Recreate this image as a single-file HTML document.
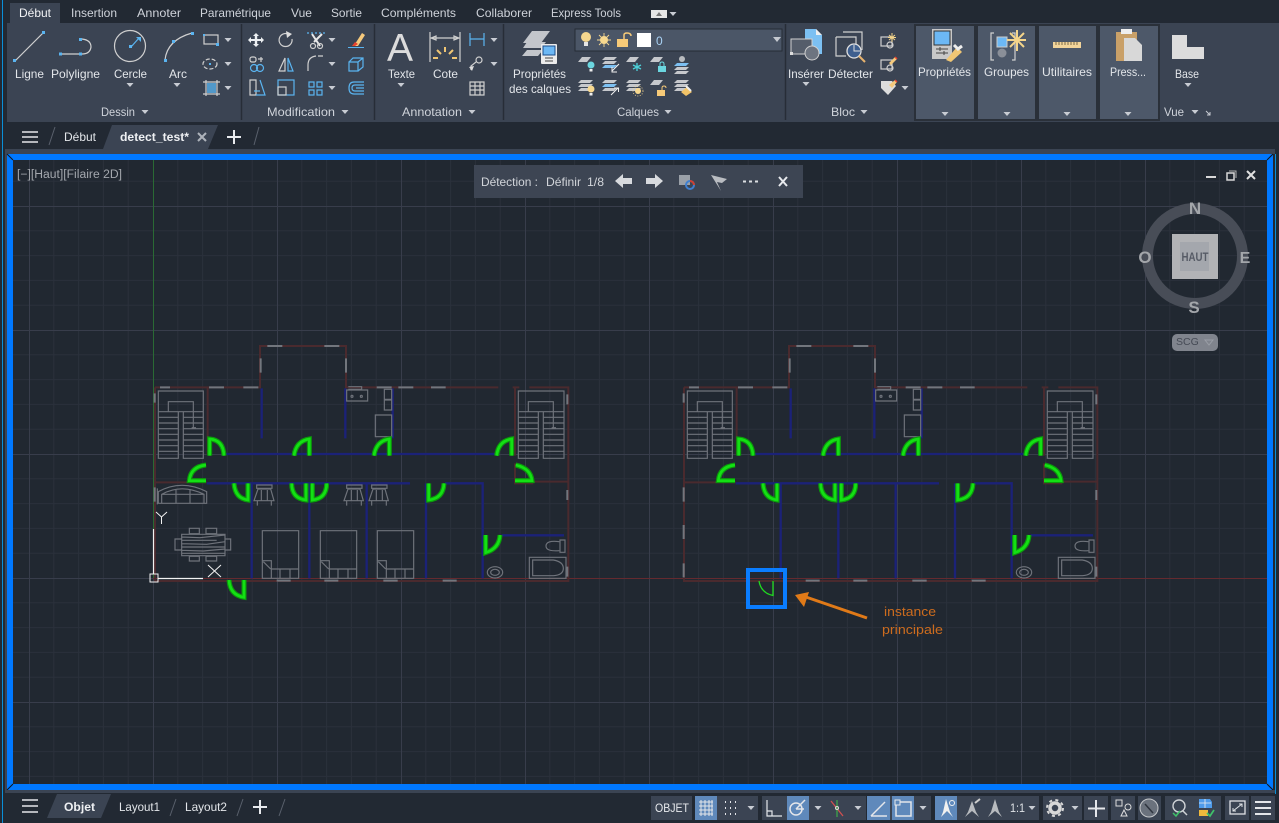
<!DOCTYPE html>
<html lang="fr"><head><meta charset="utf-8"><title>AutoCAD</title>
<style>
html,body{margin:0;padding:0;background:#222933;width:1279px;height:823px;overflow:hidden}
svg{display:block;position:absolute;left:0;top:0}
text{font-family:"Liberation Sans",sans-serif}
.t{font-size:12px;fill:#cfd3da}
.l{font-size:12px;fill:#e3e6ea}
.s{fill:none;stroke:#d0d0d0;stroke-width:1.2}
.b{fill:none;stroke:#5ab4f0;stroke-width:1.2}
.sq{fill:#5ab4f0}
.btn{fill:#3b4453}
.on{fill:#5f89bb}
.st{fill:none;stroke:#e4e6ea;stroke-width:1.5}
</style></head><body>
<svg width="1279" height="823" viewBox="0 0 1279 823" xmlns="http://www.w3.org/2000/svg">
<defs>
<pattern id="grid" x="153" y="82" width="124" height="124" patternUnits="userSpaceOnUse">
<path d="M24.8,0V124M49.6,0V124M74.4,0V124M99.2,0V124M0,24.8H124M0,49.6H124M0,74.4H124M0,99.2H124" stroke="#2a303b" stroke-width="1" fill="none"/>
<path d="M0.5,0V124M0,0.5H124" stroke="#383d4b" stroke-width="1" fill="none"/>
</pattern>
<path id="tri" d="M-3.5,-2H3.5L0,2Z" fill="#c8ccd3"/>
<path id="lay" d="M4,0H13L9,5H0Z" fill="#c6c8cc"/>
<path id="lyr" d="M3,0H15L12,3H0Z" fill="#c6c8cc"/>
<path id="lyb" d="M3,0H15L12,3H0Z" fill="#7cc0f2"/>
<g id="walls" fill="none">
<path d="M45,157H360V33H618V157H1075M1118,157H1138M1168,157H1285V738H45V157M203,157V360M45,442H200M1125,157V362M1125,385V445H1180M1180,440H1282" stroke="#4a2a2e" stroke-width="6"/>
<g stroke="#1b2278" stroke-width="7">
<path d="M365,160V310M616,160V310M758,160V310M255,357H1070M200,445H810M335,445V730M508,445V730M680,445V730M858,445V730M915,445H1028V730M1085,601H1272"/>
</g>
<g stroke="#72767d" stroke-width="6">
<path d="M60,157H90M207,157H252M310,157H355M382,33H427M553,33H598M362,70V113M618,70V113M710,157H755M775,157H820M873,157H917M44,175V203M44,457V500M1282,178V208M1282,465V495M1282,695V725M410,737H452M553,737H595M730,737H773M908,737H950"/>
</g>
<g stroke="#6f737b" stroke-width="3.500">
<path d="M55,168H190V370H130V230H115V370H55ZM85,230V200H160V278M55,230H115M55,247H115M55,264H115M55,281H115M55,298H115M55,315H115M55,332H115M55,349H115M130,230H190M130,247H190M130,264H190M130,281H190M130,298H190M130,315H190M130,332H190M130,349H190M155,278H168"/>
<path transform="translate(1080,0)" d="M55,168H192V370H130V230H115V370H55ZM85,230V200H160V278M55,230H115M55,247H115M55,264H115M55,281H115M55,298H115M55,315H115M55,332H115M55,349H115M130,230H192M130,247H192M130,264H192M130,281H192M130,298H192M130,315H192M130,332H192M130,349H192M155,278H168"/>
<path d="M620,165H683V198H620ZM625,155H665V163H625M733,163H755V193H733ZM733,195H755V225H733ZM706,240H755V305H706Z"/>
<circle cx="636" cy="184" r="3"/><circle cx="664" cy="184" r="3"/>
<path d="M1260,615H1275V652H1260ZM1258,620Q1218,615 1218,633Q1218,650 1258,647M1168,667H1278V730H1168ZM1178,675H1240Q1270,680 1270,700Q1270,720 1240,722H1178Z"/>
<ellipse cx="1065" cy="712" rx="23" ry="17"/><ellipse cx="1065" cy="712" rx="13" ry="9"/>
</g>
</g>
<g id="dp" fill="none">
<path d="M209,362V312Q250,315 252,362"/>
<path d="M508,362V312Q468,318 462,362"/>
<path d="M748,362V312Q708,318 702,362"/>
<path d="M1115,362V312Q1075,318 1070,362"/>
<path d="M198,437H148Q152,395 198,390"/>
<path d="M1125,437H1176Q1172,400 1127,390"/>
<path d="M324,445V495Q285,490 282,445"/>
<path d="M498,445V495Q455,490 455,445"/>
<path d="M517,445V495Q560,490 560,445"/>
<path d="M866,445V495Q910,490 912,445"/>
<path d="M1037,600V653Q1078,640 1080,600"/>
</g>
<g id="doors">
<use href="#dp" stroke="#0b9c0b" stroke-width="15"/>
<use href="#dp" stroke="#14e014" stroke-width="8"/>
</g>
</defs>

<!-- chrome -->
<rect width="1279" height="823" fill="#222933"/>
<rect x="2" y="0" width="1" height="823" fill="#0a8fd8"/>
<rect x="10" y="3" width="50" height="20" fill="#3b4453"/>
<g class="t">
<text x="19" y="17" style="fill:#f2f3f5" textLength="32" lengthAdjust="spacingAndGlyphs">Début</text>
<text x="71" y="17" textLength="46" lengthAdjust="spacingAndGlyphs">Insertion</text>
<text x="137" y="17" textLength="44" lengthAdjust="spacingAndGlyphs">Annoter</text>
<text x="200" y="17" textLength="71" lengthAdjust="spacingAndGlyphs">Paramétrique</text>
<text x="291" y="17" textLength="21" lengthAdjust="spacingAndGlyphs">Vue</text>
<text x="331" y="17" textLength="31" lengthAdjust="spacingAndGlyphs">Sortie</text>
<text x="381" y="17" textLength="75" lengthAdjust="spacingAndGlyphs">Compléments</text>
<text x="476" y="17" textLength="56" lengthAdjust="spacingAndGlyphs">Collaborer</text>
<text x="551" y="17" textLength="70" lengthAdjust="spacingAndGlyphs">Express Tools</text>
</g>
<rect x="651" y="10" width="16" height="8" fill="#e6e6e6"/><path d="M656,16H662L659,12Z" fill="#777"/>
<use href="#tri" x="673" y="14"/>

<!-- ribbon -->
<rect x="7" y="23" width="1272" height="99" fill="#3b4453"/>
<path d="M241.500,24V120M374.500,24V120M503.500,24V120M785.500,24V120" stroke="#272d37" stroke-width="1.500"/>
<g fill="#4d5869" stroke="#2a3039" stroke-width="2">
<rect x="915" y="25" width="60" height="95"/><rect x="977" y="25" width="59" height="95"/><rect x="1038" y="25" width="59" height="95"/><rect x="1099" y="25" width="60" height="95"/>
</g>

<!-- draw icons -->
<path class="s" d="M15,61L43,33"/><rect class="sq" x="13" y="59" width="3" height="3"/><rect class="sq" x="42" y="31" width="3" height="3"/>
<path class="s" d="M61,54H80M82,39Q91,40 91,47Q90,54 82,54"/><rect class="sq" x="59" y="52.500" width="3" height="3"/><rect class="sq" x="79" y="52.500" width="3" height="3"/><rect class="sq" x="79" y="38" width="3" height="3"/>
<circle class="s" cx="130" cy="46" r="15.500"/><path class="b" d="M131,47L139,38"/><path class="sq" d="M136,37H141V42Z"/><rect class="sq" x="129" y="45" width="3" height="3"/>
<path class="s" d="M165,60Q167,40 192,33"/><rect class="sq" x="164" y="59" width="3" height="3"/><rect class="sq" x="172" y="40" width="3" height="3"/><rect class="sq" x="191" y="32" width="3" height="3"/>
<rect class="s" x="204" y="35" width="14" height="9"/><rect class="sq" x="203" y="34" width="2" height="2"/><rect class="sq" x="216" y="43" width="3" height="3"/>
<ellipse class="s" cx="210" cy="64" rx="7" ry="5" stroke-dasharray="4 2"/><rect class="sq" x="209" y="63" width="2" height="2"/>
<path class="s" d="M203,82H220M203,94H220M206,80V96M217,80V96"/><rect x="207" y="83" width="9" height="10" fill="#5ab4f0" opacity=".75"/>
<use href="#tri" x="228" y="40"/><use href="#tri" x="228" y="64"/><use href="#tri" x="228" y="88"/>

<!-- modify icons -->
<path d="M256,33L259,36H257.200V39H261V37L264,40L261,43V41H257.200V44H259L256,47L253,44H254.800V41H251V43L248,40L251,37V39H254.800V36H253Z" fill="#eceff2"/>
<path class="s" stroke-width="1.500" d="M288,34A6.500,6.500 0 1 0 292,39"/><path d="M286,31L292,34L287,38Z" fill="#ddd"/>
<path d="M307,33H325" stroke="#5ab4f0" stroke-width="1.200" stroke-dasharray="2 2"/><path d="M312,34L320,46M322,34L314,42" stroke="#e8e8e8" stroke-width="2"/><circle class="s" cx="313" cy="46" r="2.500"/><circle class="s" cx="320" cy="46" r="2.500"/>
<use href="#tri" x="332" y="40"/>
<path d="M355,44L362,33L365,35L358,46L352,46Z" fill="#f5c97c"/><path d="M352,46L355,42L358,44L355,46Z" fill="#e8432e"/><path d="M348,47.500H364" stroke="#5ab4f0"/>
<rect class="s" x="250" y="57" width="6" height="5" rx="2"/><path class="s" d="M258,59H263M261,57V62"/><circle class="b" cx="254" cy="68" r="3.500"/><circle class="b" cx="260" cy="68" r="3.500"/>
<path class="s" d="M285,58V71H279Z"/><path class="b" d="M288,58V71H293Z"/>
<path class="s" d="M308,71V65Q308,57 316,56M318,56H323"/>
<use href="#tri" x="332" y="64"/>
<path class="b" d="M349,62H358V71H349ZM349,62L353,58H363V67L358,71M358,62L363,58"/>
<path class="s" d="M250,80H256L256,95H250Z"/><path class="b" d="M260,80L265,95H256M254,91H260"/>
<rect class="b" x="278" y="80" width="16" height="15"/><rect class="s" x="278" y="87" width="8" height="8" fill="#3b4453"/>
<path class="b" d="M309,82H314V87H309ZM317,82H322V87H317ZM309,90H314V95H309ZM317,90H322V95H317Z"/>
<use href="#tri" x="332" y="88"/>
<path class="b" d="M364,82H354Q349,82 349,88Q349,94 354,94H364M364,85H355Q352,85 352,88Q352,91 355,91H364M364,88H356"/>

<!-- annotation -->
<text x="387" y="61" font-size="39" fill="#dcdcdc">A</text>
<path class="s" d="M430,32V62M460,32V62M431,38H459M431,38L436,36V40ZM459,38L454,36V40Z"/>
<path d="M445,47V52M437,50L441,54M453,50L449,54M433,58H438M452,58H457" stroke="#f0c674" stroke-width="2"/>
<path class="b" d="M470,33V46M484,33V46M470,39H484"/><use href="#tri" x="494" y="40"/>
<circle class="s" cx="479" cy="60" r="3"/><path class="s" d="M476,62L471,66V70"/><path d="M469,67L472,71L474,66Z" fill="#ddd"/><use href="#tri" x="494" y="64"/>
<path class="s" d="M470,82H484V95H470ZM470,86H484M470,90H484M475,82V95M480,82V95"/>

<!-- calques -->
<path d="M532,31H550L541,43H523ZM527,42H546L541,48H523ZM527,50H543L538,56H522Z" fill="#c3c6cb"/>
<rect x="541" y="44" width="16" height="20" rx="1" fill="#ececec"/><rect x="543" y="46" width="12" height="9" fill="#6cb8f5" stroke="#1b4e8c"/><path d="M545,58H553M545,61H553" stroke="#444"/>
<rect x="575" y="29" width="207" height="22" fill="#4b5667" stroke="#262c36"/>
<circle cx="586" cy="37" r="5" fill="#f7d88f"/><rect x="584" y="42" width="4" height="4" fill="#e6e6e6"/>
<circle cx="604" cy="40" r="4" fill="#f7d88f"/><path d="M604,33V47M597,40H611M599,35L609,45M609,35L599,45" stroke="#f7d88f" stroke-width=".9"/>
<rect x="617" y="39" width="11" height="8" fill="#f7ca78"/><path d="M624,39V35Q624,33 627,33Q631,33 631,36" stroke="#f7ca78" stroke-width="1.500" fill="none"/>
<rect x="637" y="33" width="14" height="14" fill="#fff"/>
<text x="656" y="45" style="font-size:12px;fill:#a9d2f5">0</text>
<path d="M773,37H781L777,42Z" fill="#c5c9d0"/>

<use href="#lay" x="578" y="57"/><circle cx="591" cy="65" r="3.500" fill="#6bd6e0"/><rect x="589.500" y="69" width="3" height="2.500" fill="#eee"/>
<use href="#lyr" x="602" y="57"/><use href="#lyr" x="602" y="61"/><use href="#lyb" x="602" y="65"/><path d="M619,64L612,71M612,67V72H617" stroke="#f0f0f0" fill="none"/>
<use href="#lay" x="626" y="57"/><path d="M637,63V71M633,65L641,69M641,65L633,69" stroke="#4cd0d8" stroke-width="1.300"/>
<use href="#lay" x="650" y="57"/><rect x="658" y="66" width="8" height="6" fill="#6bd6e0"/><path d="M660,66V64Q660,62 662,62Q664,62 664,64V66" fill="none" stroke="#6bd6e0"/>
<circle cx="682" cy="59" r="3" fill="#b8bbbf"/><use href="#lyb" x="674" y="63"/><use href="#lyr" x="674" y="67"/><use href="#lyr" x="674" y="71"/>

<use href="#lyr" x="578" y="80"/><use href="#lyr" x="578" y="84"/><use href="#lyr" x="578" y="88"/><circle cx="591" cy="89" r="3.500" fill="#f7d88f"/><rect x="589.500" y="93" width="3" height="2.500" fill="#eee"/>
<use href="#lyr" x="602" y="80"/><use href="#lyb" x="602" y="84"/><use href="#lyr" x="602" y="88"/><path d="M611,95L618,88M614,88H618.500V92" stroke="#f0f0f0" fill="none"/>
<use href="#lyr" x="626" y="80"/><use href="#lyr" x="626" y="84"/><use href="#lyr" x="626" y="88"/><circle cx="638" cy="91" r="3" fill="#f7d88f"/><circle cx="638" cy="91" r="5" fill="none" stroke="#f7d88f" stroke-width=".8" stroke-dasharray="1 1.500"/>
<use href="#lay" x="650" y="80"/><rect x="657" y="90" width="8" height="6" fill="#f7ca78"/><path d="M662,90V88Q662,86 664,86Q666,86 666,88" fill="none" stroke="#f7ca78"/>
<use href="#lyr" x="674" y="80"/><use href="#lyr" x="674" y="84"/><use href="#lyr" x="674" y="88"/><path d="M681,92L687,87L692,92L686,96Z" fill="#f2c468"/><path d="M686,86L691,91" stroke="#eee" stroke-width="2"/>

<!-- bloc -->
<path d="M805,29H816L822,35V54H805Z" fill="#7cc0f2"/><path d="M816,29V35H822Z" fill="#eee"/>
<rect x="791" y="39" width="21" height="15" fill="#555d6a" stroke="#d0d0d0"/><circle cx="812" cy="53" r="7" fill="#6d7480" stroke="#d0d0d0"/><rect x="790" y="52" width="3" height="3" fill="#ddd"/>
<path class="s" d="M843,32H862V50M836,37H856V50M836,37V56H846"/><circle cx="854" cy="51" r="7" fill="#3e5f8f" stroke="#e0e0e0" stroke-width="1.300"/><path d="M859,56L865,62" stroke="#e7b26d" stroke-width="2"/><path d="M854,45V51H860" stroke="#ddd" fill="none"/>
<rect class="s" x="881" y="37" width="11" height="9"/><circle class="s" cx="890" cy="45" r="3"/><path d="M892,33V42M888,37.500H896M889,35L895,40M895,35L889,40" stroke="#f5d58a"/>
<rect class="s" x="881" y="60" width="11" height="9"/><circle class="s" cx="890" cy="68" r="3"/><path d="M889,63L895,57L897,59L891,65Z" fill="#f5c97c"/><path d="M895,57L897,59" stroke="#e8432e" stroke-width="1.500"/>
<path d="M881,81H892L896,86L888,95L881,88Z" fill="#ddd"/><path d="M889,85L895,80L897,82L892,88Z" fill="#f5c97c"/><path d="M895,80L897,82" stroke="#e8432e" stroke-width="1.500"/>
<use href="#tri" x="905" y="88"/>

<!-- groups icons -->
<rect x="932" y="29" width="20" height="30" fill="#c8c8c8"/><rect x="934" y="31" width="16" height="14" fill="#6cb8f5" stroke="#333"/><path d="M936,49H948M936,53H948M940,47V51M944,51V55" stroke="#444"/><path d="M946,60L957,47L962,52L951,62Z" fill="#f0c674"/><path d="M954,45L958,49L962,46" stroke="#eee" stroke-width="3" fill="none"/>
<path class="s" d="M994,33H991V60H994M1012,33H1015V60H1012"/><rect x="997" y="37" width="10" height="10" fill="#6cb8f5" stroke="#ccc"/><circle cx="1002" cy="53" r="4.500" fill="#8a8f98"/><path d="M1017,30V51M1007,40H1026M1010,33L1024,47M1024,33L1010,47" stroke="#f5d58a" stroke-width="2"/>
<rect x="1053" y="42" width="28" height="6" fill="#f2d49a"/><path d="M1056,42V45M1059,42V45M1062,42V45M1065,42V45M1068,42V45M1071,42V45M1074,42V45M1077,42V45" stroke="#7a6a48"/>
<rect x="1116" y="32" width="21" height="29" fill="#c9a068"/><rect x="1121" y="29" width="11" height="5" fill="#eee"/><path d="M1124,38H1135L1142,45V61H1124Z" fill="#d8d8d8"/>
<path d="M1172,35H1187V47H1204V59H1172Z" fill="#dcdcdc"/>

<!-- ribbon labels -->
<g class="l">
<text x="15" y="78" textLength="29" lengthAdjust="spacingAndGlyphs">Ligne</text>
<text x="51" y="78" textLength="49" lengthAdjust="spacingAndGlyphs">Polyligne</text>
<text x="114" y="78" textLength="33" lengthAdjust="spacingAndGlyphs">Cercle</text>
<text x="169" y="78" textLength="18" lengthAdjust="spacingAndGlyphs">Arc</text>
<text x="388" y="78" textLength="27" lengthAdjust="spacingAndGlyphs">Texte</text>
<text x="433" y="78" textLength="25" lengthAdjust="spacingAndGlyphs">Cote</text>
<text x="513" y="78" textLength="53" lengthAdjust="spacingAndGlyphs">Propriétés</text>
<text x="509" y="93" textLength="62" lengthAdjust="spacingAndGlyphs">des calques</text>
<text x="788" y="78" textLength="36" lengthAdjust="spacingAndGlyphs">Insérer</text>
<text x="828" y="78" textLength="45" lengthAdjust="spacingAndGlyphs">Détecter</text>
<text x="918" y="76" textLength="53" lengthAdjust="spacingAndGlyphs">Propriétés</text>
<text x="984" y="76" textLength="45" lengthAdjust="spacingAndGlyphs">Groupes</text>
<text x="1042" y="76" textLength="50" lengthAdjust="spacingAndGlyphs">Utilitaires</text>
<text x="1110" y="76" textLength="36" lengthAdjust="spacingAndGlyphs">Press...</text>
<text x="1175" y="78" textLength="24" lengthAdjust="spacingAndGlyphs">Base</text>
</g>
<g class="t">
<text x="101" y="116" textLength="34" lengthAdjust="spacingAndGlyphs">Dessin</text>
<text x="267" y="116" textLength="68" lengthAdjust="spacingAndGlyphs">Modification</text>
<text x="402" y="116" textLength="60" lengthAdjust="spacingAndGlyphs">Annotation</text>
<text x="617" y="116" textLength="42" lengthAdjust="spacingAndGlyphs">Calques</text>
<text x="831" y="116" textLength="24" lengthAdjust="spacingAndGlyphs">Bloc</text>
<text x="1164" y="116" textLength="20" lengthAdjust="spacingAndGlyphs">Vue</text>
</g>
<use href="#tri" x="145" y="112"/><use href="#tri" x="345" y="112"/><use href="#tri" x="472" y="112"/><use href="#tri" x="668" y="112"/><use href="#tri" x="864" y="112"/><use href="#tri" x="1195" y="112"/>
<use href="#tri" x="130" y="85"/><use href="#tri" x="177" y="85"/><use href="#tri" x="401" y="85"/><use href="#tri" x="806" y="84"/><use href="#tri" x="1188" y="85"/>
<use href="#tri" x="945" y="114"/><use href="#tri" x="1007" y="114"/><use href="#tri" x="1067" y="114"/><use href="#tri" x="1128" y="114"/>
<path d="M1206,111L1210,115M1210,112V115H1207" stroke="#c8ccd3" fill="none"/>

<!-- doc tabs -->
<path d="M22,132H38M22,137H38M22,142H38" stroke="#e4e6ea" stroke-width="1.600"/>
<path d="M49,145L55,127M254,145L259,127" stroke="#59606c"/>
<text x="64" y="141" class="l" textLength="32" lengthAdjust="spacingAndGlyphs">Début</text>
<path d="M103,149L112,125H218L208,149Z" fill="#3b4453"/>
<text x="120" y="141" font-size="12" font-weight="700" fill="#eef0f3" textLength="69" lengthAdjust="spacingAndGlyphs">detect_test*</text>
<path d="M198,133L206,141M206,133L198,141" stroke="#aeb3bb" stroke-width="2"/>
<path d="M234,130V144M227,137H241" stroke="#e8eaee" stroke-width="2"/>
<rect x="5" y="149" width="1270" height="5" fill="#3b4453"/>
<rect x="5" y="149" width="2" height="644" fill="#3b4453"/>

<!-- viewport -->
<rect x="13" y="160" width="1254" height="624" fill="#212831"/>
<rect x="13" y="160" width="1254" height="624" fill="url(#grid)"/>
<path d="M153.500,160V578" stroke="#2a6a34"/>
<path d="M153,578.500H1267" stroke="#652a2f"/>
<rect x="10" y="157" width="1260" height="630" fill="none" stroke="#0078ff" stroke-width="6"/>
<path d="M7,154L13,160M1273,154L1267,160M7,790L13,784M1273,790L1267,784" stroke="#10151c"/>
<rect x="5" y="790" width="1270" height="3" fill="#3b4453"/>
<rect x="1275" y="154" width="1" height="640" fill="#0a8fd8"/>

<text x="17" y="178" font-size="11.500" fill="#a3a7ad" textLength="105" lengthAdjust="spacingAndGlyphs">[−][Haut][Filaire 2D]</text>

<!-- plans -->
<g transform="translate(140,335) scale(.33333)">
<use href="#walls"/>
<use href="#doors"/>
<path d="M312,735V787Q270,780 267,735" fill="none" stroke="#0b9c0b" stroke-width="15"/>
<path d="M312,735V787Q270,780 267,735" fill="none" stroke="#14e014" stroke-width="8"/>
<g fill="none" stroke="#6f737b" stroke-width="3.500">
<path d="M55,505V470Q125,432 200,470V505ZM65,505V478Q125,445 192,478V505M108,462V505M150,462V505M65,478H192M52,460V508"/>
<path d="M125,598H255V662H125ZM105,612H125V645H105ZM255,612H272V645H255ZM148,580H178V596H148ZM198,580H230V596H198ZM148,664H178V678H148ZM198,664H230V678H198ZM125,606L180,608L255,600M125,616H230M125,626L200,628L255,620M125,636H255M125,646L190,648L255,642M125,655H255"/>
<path d="M350,450H396V460H350ZM354,462H392L402,497H342ZM352,497V512M394,497V512M364,465V497M382,465V497"/>
<path d="M620,450H666V460H620ZM624,462H660L670,497H612ZM620,497V512M664,497V512M634,465V497M652,465V497"/>
<path d="M695,450H741V460H695ZM699,462H735L745,497H687ZM695,497V512M739,497V512M709,465V497M727,465V497"/>
<path d="M367,587H476V730H367ZM367,677H394V702H420V730M420,702H476M394,702V730M370,680L392,702M450,702V730"/>
<path d="M541,587H650V730H541ZM541,677H568V702H594V730M594,702H650M568,702V730M544,680L566,702M624,702V730"/>
<path d="M712,587H821V730H712ZM712,677H739V702H765V730M765,702H821M739,702V730M715,680L737,702M795,702V730"/>
</g>
</g>
<g transform="translate(669,335) scale(.33333)">
<use href="#walls"/>
<use href="#doors"/>
<path d="M44,570V612M44,685V727" stroke="#72767d" stroke-width="6" fill="none"/>
</g>

<!-- main instance -->
<rect x="748" y="570" width="37" height="37" fill="none" stroke="#0a7dff" stroke-width="4"/>
<path d="M773,581V595.500Q761,593 759,581" fill="none" stroke="#1fdc1f" stroke-width="1.300"/>
<path d="M867,618L803,596" stroke="#e07a18" stroke-width="3"/>
<path d="M795,595L809,592L804,607Z" fill="#e07a18"/>
<text x="884" y="616" font-size="12.500" fill="#cd6c1e" textLength="52" lengthAdjust="spacingAndGlyphs">instance</text>
<text x="882" y="634" font-size="12.500" fill="#cd6c1e" textLength="61" lengthAdjust="spacingAndGlyphs">principale</text>

<!-- UCS -->
<path d="M153.500,529V574M158,578.500H203" stroke="#f2f2f2" stroke-width="1.200"/>
<rect x="150" y="574" width="8" height="8" fill="none" stroke="#f2f2f2"/>
<path d="M208,565L221,577M221,565L208,577M156,512L161.500,517L167,512M161.500,517V524" stroke="#f2f2f2" fill="none"/>

<!-- detection bar -->
<rect x="474" y="165" width="329" height="33" fill="#3d4553"/>
<g font-size="12" fill="#d2d5da">
<text x="481" y="186" textLength="57" lengthAdjust="spacingAndGlyphs">Détection :</text>
<text x="546" y="186" textLength="35" lengthAdjust="spacingAndGlyphs">Définir</text>
<text x="587" y="186" textLength="17" lengthAdjust="spacingAndGlyphs">1/8</text>
</g>
<path d="M615,181L623,174V178H632V184H623V188Z" fill="#d8dade"/>
<path d="M663,181L655,174V178H646V184H655V188Z" fill="#d8dade"/>
<rect x="679" y="175" width="11" height="10" fill="#9aa0a8"/><circle cx="690" cy="185" r="4" fill="none" stroke="#3f7fd0" stroke-width="2"/><path d="M690,181A4,4 0 0 1 694,185" stroke="#d04030" stroke-width="2" fill="none"/>
<path d="M711,175L727,179L722,183L717,182L721,191Z" fill="#b9bcc1"/>
<path d="M743,181.500H746M749,181.500H752M755,181.500H758" stroke="#dcdee2" stroke-width="2"/>
<path d="M779,177L787,186M787,177L779,186" stroke="#e8eaee" stroke-width="2"/>

<!-- window controls -->
<path d="M1206,177H1216" stroke="#d8d8d8" stroke-width="2"/>
<rect x="1227" y="173" width="7" height="7" fill="none" stroke="#d8d8d8" stroke-width="1.500"/><path d="M1229,171H1236V178" stroke="#b0b0b0" fill="none"/>
<path d="M1247,171L1255,179M1255,171L1247,179" stroke="#e0e0e0" stroke-width="2"/>

<!-- viewcube -->
<circle cx="1195" cy="256" r="47.500" fill="none" stroke="#484d57" stroke-width="11"/>
<rect x="1172" y="234" width="46" height="45" fill="#b2b3b6"/><rect x="1180" y="242" width="29" height="29" fill="#a4a7ad"/>
<text x="1195" y="261" text-anchor="middle" font-size="12" font-weight="700" fill="#565b66" textLength="27" lengthAdjust="spacingAndGlyphs">HAUT</text>
<g font-size="17" font-weight="700" fill="#a3a6aa" text-anchor="middle">
<text x="1195" y="214">N</text><text x="1245" y="263" font-size="16">E</text><text x="1145" y="263">O</text><text x="1194" y="313">S</text>
</g>
<rect x="1172" y="334" width="46" height="17" rx="5" fill="#80848d"/>
<text x="1176" y="345" font-size="10.500" style="fill:#454a55">SCG</text>
<path d="M1205,340H1213L1209,345Z" fill="none" stroke="#9a9ea6"/>

<!-- status bar -->
<rect x="7" y="793" width="1268" height="30" fill="#222933"/>
<path d="M22,800H38M22,806H38M22,812H38" stroke="#e4e6ea" stroke-width="1.600"/>
<path d="M47,818L57,794H111L101,818Z" fill="#3b4453"/>
<text x="64" y="811" font-size="12" font-weight="700" fill="#eef0f3" textLength="31" lengthAdjust="spacingAndGlyphs">Objet</text>
<text x="119" y="811" class="l" textLength="41" lengthAdjust="spacingAndGlyphs">Layout1</text>
<text x="185" y="811" class="l" textLength="42" lengthAdjust="spacingAndGlyphs">Layout2</text>
<path d="M170,816L176,799M237,816L243,799M279,816L285,799" stroke="#59606c"/>
<path d="M260,800V814M253,807H267" stroke="#e8eaee" stroke-width="2"/>

<g class="btn">
<rect x="651" y="796" width="41" height="24"/><rect x="695" y="796" width="63" height="24"/><rect x="762" y="796" width="104" height="24"/><rect x="867" y="796" width="64" height="24"/><rect x="935" y="796" width="104" height="24"/><rect x="1043" y="796" width="39" height="24"/><rect x="1084" y="796" width="24" height="24"/><rect x="1111" y="796" width="24" height="24"/><rect x="1138" y="796" width="23" height="24"/><rect x="1165" y="796" width="56" height="24"/><rect x="1225" y="796" width="24" height="24"/><rect x="1251" y="796" width="24" height="24"/>
</g>
<g class="on">
<rect x="695" y="796" width="22" height="24"/><rect x="787" y="796" width="22" height="24"/><rect x="867" y="796" width="23" height="24"/><rect x="892" y="796" width="22" height="24"/><rect x="935" y="796" width="22" height="24"/>
</g>
<text x="655" y="812" font-size="12" fill="#e8eaee" textLength="34" lengthAdjust="spacingAndGlyphs">OBJET</text>
<path class="st" d="M699,802H713M699,806H713M699,810H713M699,814H713M701,800V816M705,800V816M709,800V816M712,800V816" style="stroke-width:1"/>
<path d="M725,802H726M730,802H731M735,802H736M725,808H726M730,808H731M735,808H736M725,814H726M730,814H731M735,814H736" stroke="#e4e6ea" stroke-width="2"/>
<use href="#tri" x="751" y="808"/>
<path class="st" d="M767,800V816H782M767,811H772V816" style="stroke-width:1.200"/>
<circle class="st" cx="796" cy="809" r="6"/><path class="st" d="M796,809L805,800M796,809H804"/>
<use href="#tri" x="818" y="808"/>
<path d="M831,801L843,816" stroke="#d05050" stroke-width="1.300"/><path d="M837,800V817" stroke="#3fa54b" stroke-width="1.300"/><circle cx="837" cy="808" r="1.500" fill="none" stroke="#ddd"/>
<use href="#tri" x="858" y="808"/>
<path class="st" d="M871,816L885,802M871,816H887"/>
<rect class="st" x="896" y="802" width="15" height="14"/><rect x="895" y="800" width="5" height="5" fill="#5f89bb" stroke="#e8eaee"/>
<use href="#tri" x="923" y="808"/>
<path d="M946,799L950,812L953,817L947,811L941,817L943,812Z" fill="#f0f0f0"/><circle cx="952" cy="803" r="2.500" fill="none" stroke="#f0f0f0"/>
<path d="M972,801L976,812L979,817L972,811L965,817L968,812Z" fill="#b8bbbf"/><path d="M975,803L980,799" stroke="#ccc" stroke-width="2"/>
<path d="M995,799L999,812L1002,817L995,811L988,817L991,812Z" fill="#b8bbbf"/>
<text x="1010" y="812" font-size="12" fill="#dfe2e6" textLength="15" lengthAdjust="spacingAndGlyphs">1:1</text>
<use href="#tri" x="1032" y="808"/>
<circle cx="1055" cy="808" r="5" fill="none" stroke="#d8d8d8" stroke-width="3.500"/><circle cx="1055" cy="808" r="8" fill="none" stroke="#d8d8d8" stroke-width="2" stroke-dasharray="3 3.300"/>
<use href="#tri" x="1075" y="808"/>
<path d="M1096,800V817M1088,808.500H1105" stroke="#e4e6ea" stroke-width="2"/>
<rect x="1116" y="800" width="6" height="6" fill="none" stroke="#ddd"/><circle cx="1128" cy="807" r="3" fill="none" stroke="#ddd"/><path d="M1121,816L1124,810L1127,816Z" fill="none" stroke="#ddd"/>
<circle cx="1149" cy="808" r="9" fill="#6b727d" stroke="#c6c8cb"/><path d="M1145,804L1153,813" stroke="#2e343e" stroke-width="1.500"/>
<circle cx="1179" cy="806" r="6" fill="none" stroke="#cfd2d6" stroke-width="1.400"/><path d="M1183,811L1187,815" stroke="#cfd2d6" stroke-width="1.500"/><path d="M1173,813L1176,816L1180,811" stroke="#3fc26a" stroke-width="1.500" fill="none"/>
<path d="M1199,799H1210L1212,802V808H1199Z" fill="#4f9bea"/><path d="M1199,810H1208V816H1199Z" fill="#f0b93c"/><path d="M1207,813L1210,816L1214,810" stroke="#3fc26a" stroke-width="1.700" fill="none"/><path d="M1205,799V808M1199,803H1211" stroke="#eee" stroke-width=".8"/>
<rect x="1230" y="801" width="15" height="13" fill="none" stroke="#dfe2e6" stroke-width="1.300"/><path d="M1233,811L1242,804M1239,804H1242V807M1233,808V811H1236" stroke="#dfe2e6" fill="none"/>
<path d="M1255,802H1271M1255,808H1271M1255,814H1271" stroke="#e4e6ea" stroke-width="2"/>
</svg>
</body></html>
